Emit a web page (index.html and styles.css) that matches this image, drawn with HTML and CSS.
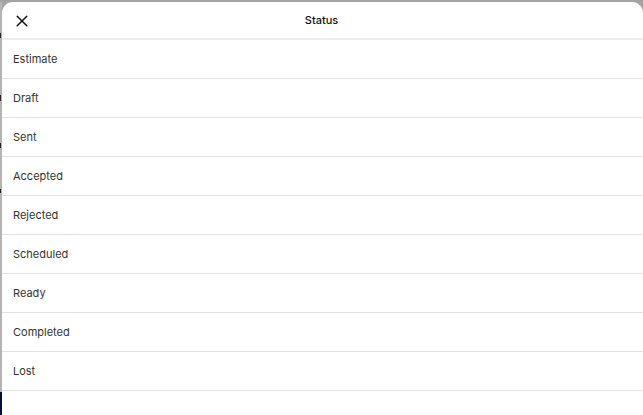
FILE: index.html
```html
<!DOCTYPE html>
<html>
<head>
<meta charset="utf-8">
<title>Status</title>
<link rel="stylesheet" href="styles.css">
</head>
<body>
<div class="screen">
  <div class="gutter">
    <span class="mark mark-1"></span>
    <span class="mark mark-2"></span>
    <span class="mark mark-3"></span>
    <span class="mark mark-4"></span>
    <span class="gutter-fill"></span>
    <span class="gutter-dark"></span>
  </div>
  <div class="sheet">
    <div class="sheet-header">
      <button class="close" aria-label="Close">
        <svg width="12" height="12" viewBox="0 0 12 12">
          <path d="M1.2 1.2 L10.8 10.8 M10.8 1.2 L1.2 10.8" stroke="#111" stroke-width="1.5" stroke-linecap="round" fill="none"/>
        </svg>
      </button>
      <div class="sheet-title">Status</div>
    </div>
    <ul class="options">
      <li>Estimate</li>
      <li>Draft</li>
      <li>Sent</li>
      <li>Accepted</li>
      <li>Rejected</li>
      <li>Scheduled</li>
      <li>Ready</li>
      <li>Completed</li>
      <li>Lost</li>
    </ul>
  </div>
</div>
</body>
</html>
```

FILE: styles.css
```css
html, body {
  margin: 0;
  padding: 0;
  height: 100%;
}

body {
  background: #a4a4a4;
  font-family: Inter, "Liberation Sans", sans-serif;
  font-size: 11px;
  color: #333;
  overflow: hidden;
}

.screen {
  display: flex;
  height: 413px;
  padding-top: 2px;
}

.gutter {
  width: 2px;
  display: flex;
  flex-direction: column;
  background: #b4b4b4;
}

.mark {
  display: block;
  width: 1px;
  height: 5px;
  background: #222;
}

.mark-1 { margin-top: 31px; }
.mark-2 { margin-top: 57px; height: 6px; }
.mark-3 { margin-top: 42px; }
.mark-4 { margin-top: 41px; height: 4px; }

.gutter-fill {
  flex: 1;
}

.gutter-dark {
  display: block;
  height: 23px;
  background: #0b0b3c;
}

.sheet {
  flex: 1;
  background: #fff;
  border-radius: 11px 11px 0 0;
}

.sheet-header {
  height: 36px;
  display: flex;
  align-items: center;
  justify-content: center;
  position: relative;
  border-bottom: 2px solid #ececec;
}

.close {
  position: absolute;
  left: 13px;
  top: 12px;
  width: 14px;
  height: 14px;
  padding: 1px;
  border: 0;
  background: none;
}

.sheet-title {
  font-weight: 500;
  color: #111;
  font-size: 11px;
  margin-left: -2px;
}

.options {
  list-style: none;
  margin: 0;
  padding: 0;
}

.options li {
  height: 38px;
  line-height: 38px;
  padding-left: 11px;
  border-bottom: 1px solid #e2e2e2;
}
```
